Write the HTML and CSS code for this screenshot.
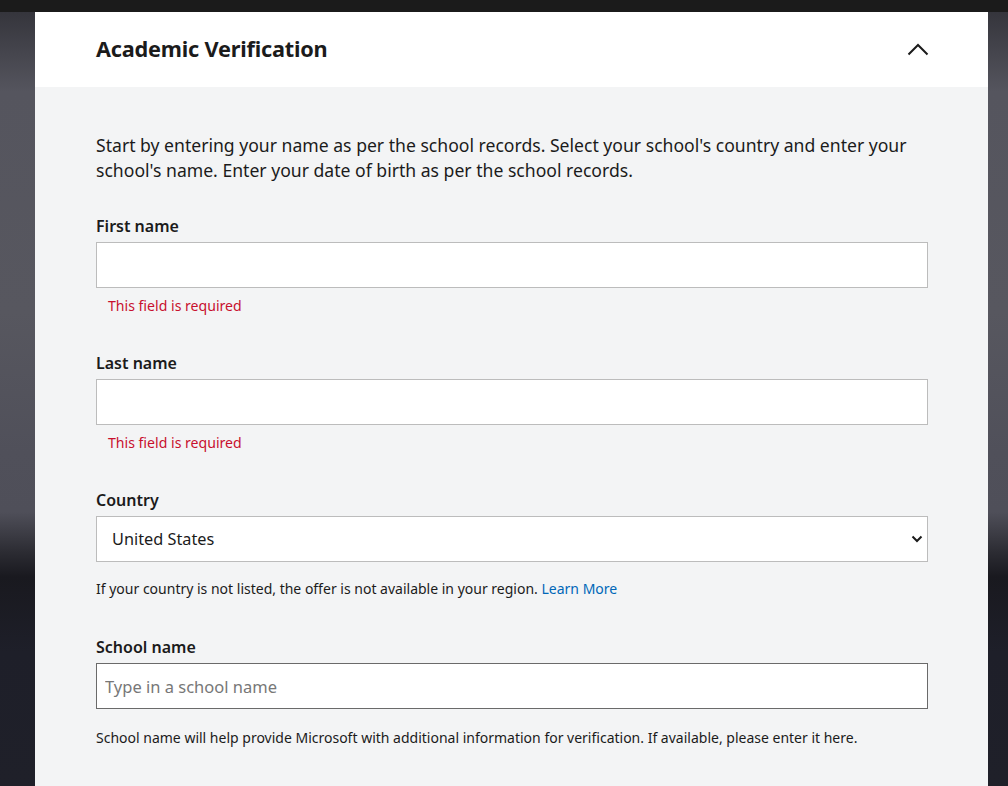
FILE: index.html
```html
<!DOCTYPE html>
<html lang="en">
<head>
  <meta charset="UTF-8">
  <title>Academic Verification</title>
  <link rel="stylesheet" href="styles.css">
</head>
<body>

<div class="topbar"></div>
<div class="backdrop">
  <div class="panel">
    <div class="panel-header">
      <h2>Academic Verification</h2>
      <svg class="chevron" width="22" height="14" viewBox="0 0 22 14">
        <path d="M1.5 12.5 L11 3 L20.5 12.5" fill="none" stroke="#1b1b1b" stroke-width="2"/>
      </svg>
    </div>

    <div class="panel-body">
      <p class="intro">Start by entering your name as per the school records. Select your school's country and enter your school's name. Enter your date of birth as per the school records.</p>

      <div class="field">
        <label for="firstName">First name</label>
        <input type="text" id="firstName">
        <div class="error">This field is required</div>
      </div>

      <div class="field">
        <label for="lastName">Last name</label>
        <input type="text" id="lastName">
        <div class="error">This field is required</div>
      </div>

      <div class="field">
        <label for="country">Country</label>
        <div class="select-wrap">
          <select id="country">
            <option>United States</option>
            <option>Canada</option>
            <option>United Kingdom</option>
          </select>
          <svg class="select-arrow" width="12" height="8" viewBox="0 0 12 8">
            <path d="M1.5 1.5 L6 6 L10.5 1.5" fill="none" stroke="#1b1b1b" stroke-width="2"/>
          </svg>
        </div>
        <div class="help">If your country is not listed, the offer is not available in your region. <a href="#">Learn More</a></div>
      </div>

      <div class="field">
        <label for="school">School name</label>
        <input type="text" id="school" class="dark" placeholder="Type in a school name">
        <div class="help help-last">School name will help provide Microsoft with additional information for verification. If available, please enter it here.</div>
      </div>

      <div class="field">
        <label for="dob">Date of birth</label>
      </div>
    </div>
  </div>
</div>

</body>
</html>
```

FILE: styles.css
```css
html, body {
  margin: 0;
  height: 100%;
  overflow: hidden;
}
body {
  font-family: "Noto Sans", "Open Sans", sans-serif;
  background-color: #1b1b1b;
  color: #1b1b1b;
}
.topbar {
  height: 12px;
  background-color: #1b1b1b;
}
.backdrop {
  padding: 0 20px 0 35px;
  min-height: 774px;
  background: linear-gradient(to bottom, #35353c 0px, #55555e 80px, #57575f 300px, #50505a 440px, #4f4f59 500px, #2c2c33 540px, #19191f 565px, #1e1f29 640px, #1f2029 774px);
}
.panel {
  background-color: #f3f4f5;
  min-height: 774px;
}
.panel-header {
  background-color: #fff;
  height: 75px;
  padding: 0 59px 0 61px;
  display: flex;
  align-items: center;
  justify-content: space-between;
}
.panel-header h2 {
  margin: -3px 0 0;
  font-size: 21.7px;
  font-weight: 700;
  letter-spacing: -0.2px;
}
.chevron {
  margin-top: -2px;
}
.panel-body {
  padding: 46px 60px 0 61px;
}
.intro {
  margin: 0 0 32px;
  font-size: 17.6px;
  line-height: 25px;
}
.field label {
  display: block;
  font-size: 16px;
  font-weight: 600;
  line-height: 22px;
  margin-bottom: 5px;
}
.field input, .field select {
  box-sizing: border-box;
  width: 100%;
  height: 46px;
  border: 1px solid #bcbcbc;
  background-color: #fff;
  font-family: inherit;
  font-size: 17px;
  color: #1b1b1b;
  outline: none;
  margin: 0;
}
.field input.dark {
  border-color: #6a6a6a;
  padding: 0 8px;
  font-size: 16.5px;
}
.field input::placeholder {
  color: #777;
}
.select-wrap {
  position: relative;
}
.field select {
  appearance: none;
  padding: 0 15px;
  border-radius: 0;
  font-size: 16.3px;
}
.select-arrow {
  position: absolute;
  right: 5px;
  top: 19px;
}
.error {
  color: #c8102e;
  font-size: 14.1px;
  line-height: 20px;
  padding: 8px 0 0 12px;
  height: 56px;
}
.help {
  font-size: 14px;
  line-height: 20px;
  padding: 17px 0 0;
  height: 57px;
}
.help-last {
  padding-top: 19px;
}
.help a {
  color: #0067b8;
  text-decoration: none;
}
```
